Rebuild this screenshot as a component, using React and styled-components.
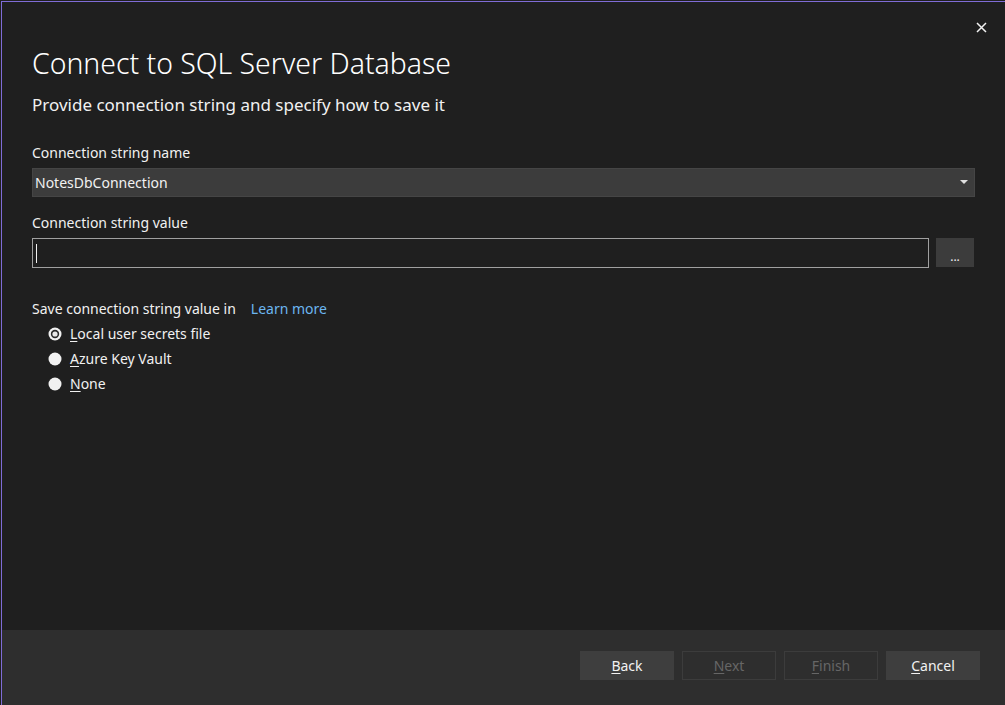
import React from 'react';
import styled, { createGlobalStyle } from 'styled-components';

const GlobalStyle = createGlobalStyle`
  html, body {
    margin: 0;
    padding: 0;
    background: #2b2b2b;
    overflow: hidden;
  }
  body {
    font-family: "Noto Sans", "Open Sans", sans-serif;
    color: #f1f1f1;
  }
`;

const Frame = styled.div`
  width: 1005px;
  height: 705px;
  box-sizing: border-box;
  padding-top: 1px;
  background: #1f1f1f;
`;

const Window = styled.div`
  height: 704px;
  box-sizing: border-box;
  border-top: 1px solid #7f6cd6;
  border-left: 1px solid #7f6cd6;
  margin-left: 1px;
  display: flex;
  flex-direction: column;
  background: #1f1f1f;
`;

const Body = styled.div`
  flex: 1;
  position: relative;
  padding: 42px 30px 0 30px;
  display: flex;
  flex-direction: column;
`;

const CloseButton = styled.button`
  position: absolute;
  top: 15px;
  right: 14px;
  width: 20px;
  height: 20px;
  padding: 0;
  border: none;
  background: transparent;
  display: flex;
  align-items: center;
  justify-content: center;
`;

const Title = styled.h1`
  margin: 0;
  font-weight: 300;
  font-size: 28.4px;
  line-height: 38px;
  color: #ffffff;
`;

const Subtitle = styled.h2`
  margin: 11px 0 0 0;
  font-weight: 400;
  font-size: 17px;
  line-height: 24px;
  color: #f1f1f1;
`;

const Label = styled.div`
  font-size: 14px;
  line-height: 20px;
  color: #f1f1f1;
  margin-top: ${p => p.$top}px;
  margin-bottom: 5px;
`;

const Combo = styled.div`
  height: 29px;
  box-sizing: border-box;
  background: #3c3c3c;
  border: 1px solid #454545;
  display: flex;
  align-items: center;
  justify-content: space-between;
  padding: 0 6px 0 2px;
  font-size: 14px;
  color: #f1f1f1;
`;

const InputRow = styled.div`
  display: flex;
  gap: 7px;
  height: 30px;
  margin-right: 1px;
`;

const TextInput = styled.div`
  flex: 1;
  box-sizing: border-box;
  border: 1px solid #a0a0a0;
  background: #1f1f1f;
  display: flex;
  align-items: center;
  padding-left: 3px;
`;

const Caret = styled.span`
  width: 1px;
  height: 19px;
  background: #f1f1f1;
`;

const BrowseButton = styled.div`
  width: 38px;
  height: 29px;
  background: #3c3c3c;
  display: flex;
  align-items: flex-end;
  justify-content: center;
  box-sizing: border-box;
  font-size: 12px;
  line-height: 20px;
  color: #f1f1f1;
`;

const SaveRow = styled.div`
  display: flex;
  align-items: center;
  gap: 15px;
  margin-top: 31px;
  font-size: 14px;
  line-height: 20px;
`;

const Link = styled.a`
  color: #6cb6f0;
  text-decoration: none;
  font-size: 14px;
`;

const RadioList = styled.div`
  display: flex;
  flex-direction: column;
  padding-left: 16px;
  margin-top: 2px;
`;

const RadioItem = styled.label`
  display: flex;
  align-items: center;
  gap: 8px;
  height: 25px;
  font-size: 14px;
  color: #f1f1f1;
`;

const Footer = styled.div`
  height: 75px;
  background: #2e2e2e;
  display: flex;
  justify-content: flex-end;
  align-items: flex-start;
  gap: 8px;
  padding: 21px 25px 0 0;
  box-sizing: border-box;
`;

const FooterButton = styled.button`
  width: 94px;
  height: 29px;
  box-sizing: border-box;
  font-family: inherit;
  font-size: 14px;
  padding: 0;
  background: ${p => (p.disabled ? '#2e2e2e' : '#3e3e3e')};
  border: 1px solid ${p => (p.disabled ? '#3c3c3c' : '#3e3e3e')};
  color: ${p => (p.disabled ? '#666666' : '#f1f1f1')};
`;

const U = styled.span`
  text-decoration: underline;
  text-underline-offset: 2px;
`;

const Radio = ({ checked }) => (
  <svg width="14" height="14" viewBox="0 0 14 14">
    <circle cx="7" cy="7" r="6.5" fill="#f1f1f1" />
    {checked && <circle cx="7" cy="7" r="4.2" fill="#2a2a2a" />}
    {checked && <circle cx="7" cy="7" r="2.6" fill="#e8e8e8" />}
  </svg>
);

export default function App() {
  return (
    <>
      <GlobalStyle />
      <Frame>
        <Window>
          <Body>
            <CloseButton aria-label="Close">
              <svg width="11" height="11" viewBox="0 0 11 11">
                <path d="M1 1 L10 10 M10 1 L1 10" stroke="#f1f1f1" strokeWidth="1.5" />
              </svg>
            </CloseButton>
            <Title>Connect to SQL Server Database</Title>
            <Subtitle>Provide connection string and specify how to save it</Subtitle>

            <Label $top={26}>Connection string name</Label>
            <Combo>
              <span>NotesDbConnection</span>
              <svg width="8" height="5" viewBox="0 0 8 5">
                <path d="M0 0 H8 L4 4 Z" fill="#e0e0e0" />
              </svg>
            </Combo>

            <Label $top={16}>Connection string value</Label>
            <InputRow>
              <TextInput>
                <Caret />
              </TextInput>
              <BrowseButton>...</BrowseButton>
            </InputRow>

            <SaveRow>
              <span>Save connection string value in</span>
              <Link href="#">Learn more</Link>
            </SaveRow>
            <RadioList>
              <RadioItem>
                <Radio checked />
                <span><U>L</U>ocal user secrets file</span>
              </RadioItem>
              <RadioItem>
                <Radio />
                <span><U>A</U>zure Key Vault</span>
              </RadioItem>
              <RadioItem>
                <Radio />
                <span><U>N</U>one</span>
              </RadioItem>
            </RadioList>
          </Body>
          <Footer>
            <FooterButton><U>B</U>ack</FooterButton>
            <FooterButton disabled><U>N</U>ext</FooterButton>
            <FooterButton disabled><U>F</U>inish</FooterButton>
            <FooterButton><U>C</U>ancel</FooterButton>
          </Footer>
        </Window>
      </Frame>
    </>
  );
}
